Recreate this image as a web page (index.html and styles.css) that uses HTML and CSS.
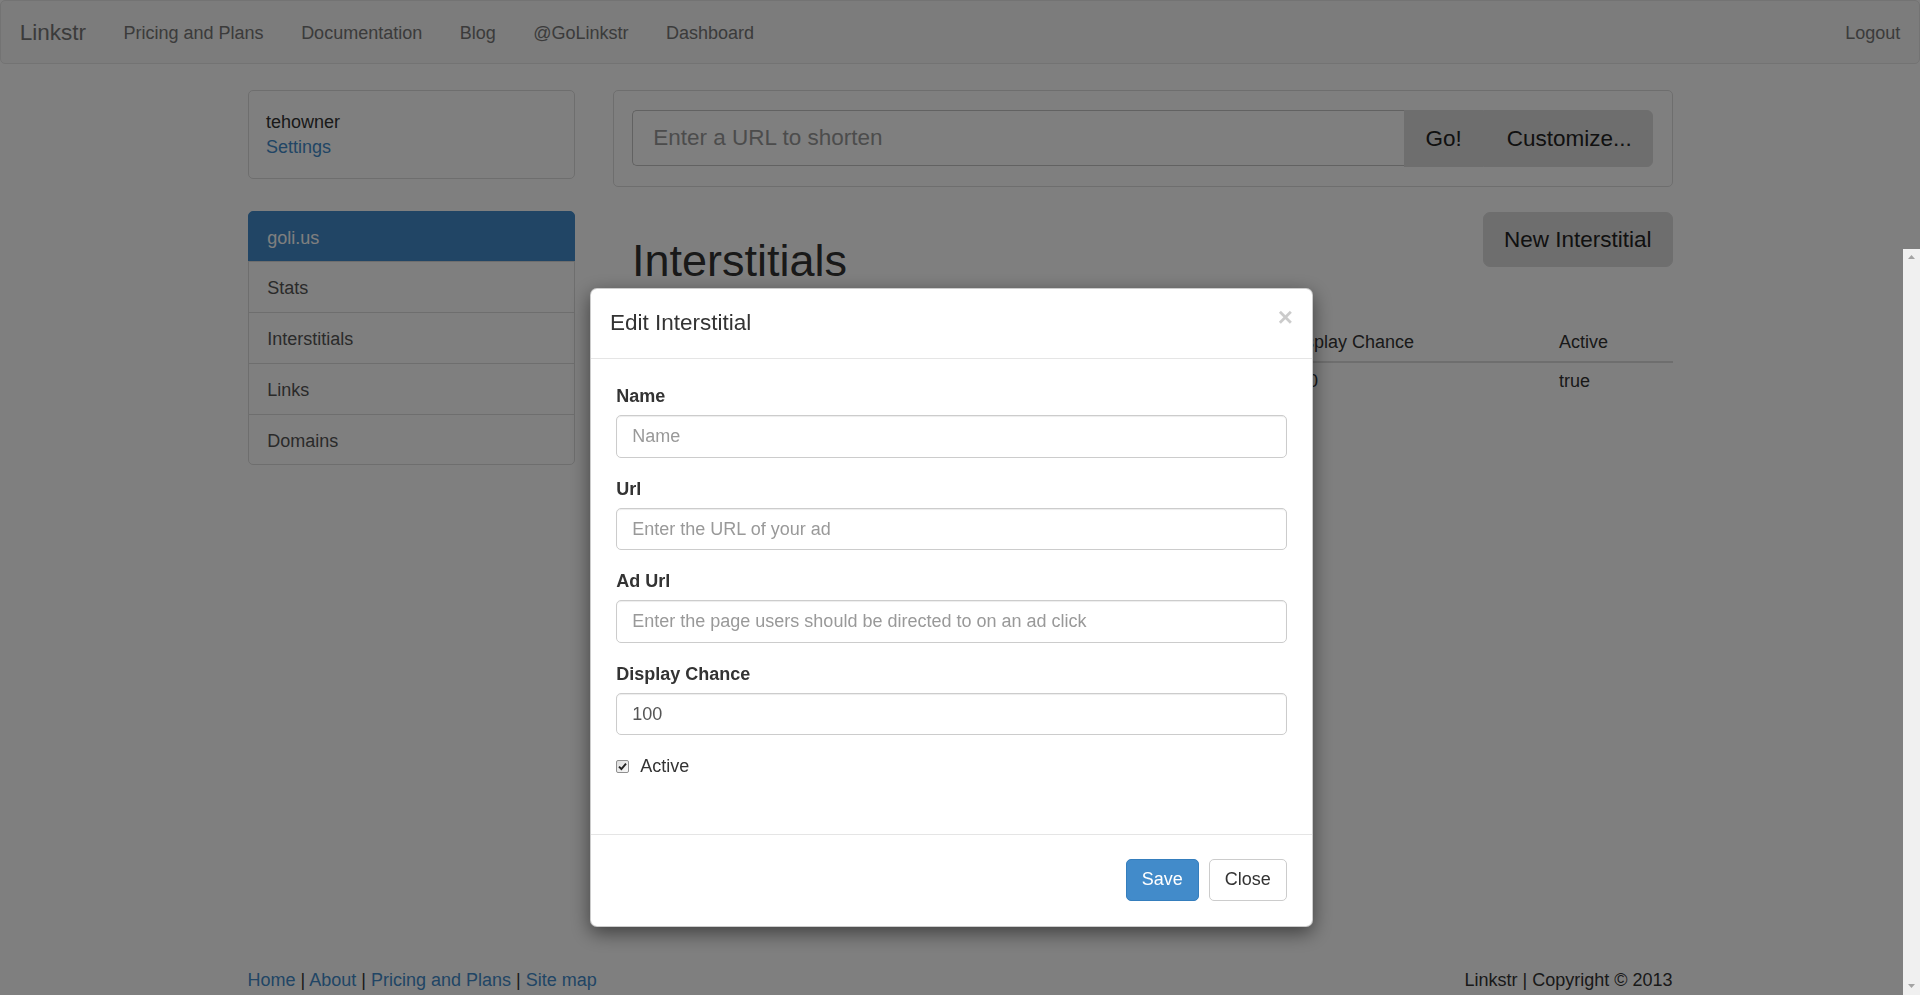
FILE: index.html
```html
<!DOCTYPE html>
<html lang="en">
<head>
<meta charset="utf-8">
<title>Linkstr - Interstitials</title>
<link rel="stylesheet" href="styles.css">
</head>
<body>
<nav class="navbar">
  <a class="brand" href="#">Linkstr</a>
  <ul class="nav">
    <li><a href="#">Pricing and Plans</a></li>
    <li><a href="#">Documentation</a></li>
    <li><a href="#">Blog</a></li>
    <li><a href="#">@GoLinkstr</a></li>
    <li><a href="#">Dashboard</a></li>
  </ul>
  <ul class="nav nav-right">
    <li><a href="#">Logout</a></li>
  </ul>
</nav>

<div class="container main">
  <aside class="sidebar">
    <div class="panel user-panel">
      <div>tehowner</div>
      <a href="#">Settings</a>
    </div>
    <div class="list-group">
      <a class="list-item active" href="#">goli.us</a>
      <a class="list-item" href="#">Stats</a>
      <a class="list-item" href="#">Interstitials</a>
      <a class="list-item" href="#">Links</a>
      <a class="list-item" href="#">Domains</a>
    </div>
  </aside>

  <section class="content">
    <div class="panel shorten-panel">
      <form class="input-group">
        <input class="input-lg" type="text" placeholder="Enter a URL to shorten">
        <div class="group-btns">
          <button type="button" class="btn-gray">Go!</button>
          <button type="button" class="btn-gray last">Customize...</button>
        </div>
      </form>
    </div>

    <div class="page-head">
      <h1>Interstitials</h1>
      <button type="button" class="btn-gray btn-new">New Interstitial</button>
    </div>

    <table class="table">
      <thead>
        <tr>
          <th class="col-name">Name</th>
          <th class="col-url">Url</th>
          <th class="col-ad">Ad Url</th>
          <th class="col-chance">Display Chance</th>
          <th class="col-active">Active</th>
        </tr>
      </thead>
      <tbody>
        <tr>
          <td>Sample Ad</td>
          <td>http://goli.us/ad</td>
          <td>http://goli.us</td>
          <td>100</td>
          <td>true</td>
        </tr>
      </tbody>
    </table>
  </section>
</div>

<footer class="container footer">
  <div class="footer-links">
    <a href="#">Home</a> | <a href="#">About</a> | <a href="#">Pricing and Plans</a> | <a href="#">Site map</a>
  </div>
  <div class="copyright">Linkstr | Copyright © 2013</div>
</footer>

<div class="backdrop"></div>

<div class="modal">
  <div class="modal-dialog">
    <div class="modal-content">
      <div class="modal-header">
        <h4 class="modal-title">Edit Interstitial</h4>
        <button type="button" class="close">×</button>
      </div>
      <div class="modal-body">
        <div class="form-group">
          <label>Name</label>
          <input class="form-control" type="text" placeholder="Name">
        </div>
        <div class="form-group">
          <label>Url</label>
          <input class="form-control" type="text" placeholder="Enter the URL of your ad">
        </div>
        <div class="form-group">
          <label>Ad Url</label>
          <input class="form-control" type="text" placeholder="Enter the page users should be directed to on an ad click">
        </div>
        <div class="form-group">
          <label>Display Chance</label>
          <input class="form-control" type="text" value="100">
        </div>
        <div class="checkbox">
          <svg class="check-box" width="13" height="13" viewBox="0 0 13 13">
            <defs>
              <linearGradient id="cbg" x1="0" y1="0" x2="1" y2="1">
                <stop offset="0" stop-color="#dcdcdc"/>
                <stop offset="1" stop-color="#fafafa"/>
              </linearGradient>
            </defs>
            <rect x="0.5" y="0.5" width="12" height="12" rx="1.5" fill="url(#cbg)" stroke="#8f8f8f"/>
            <path d="M3 6.6 L5.4 9 L10 3.6" fill="none" stroke="#222" stroke-width="1.9"/>
          </svg>
          <span>Active</span>
        </div>
      </div>
      <div class="modal-footer">
        <button type="button" class="btn btn-primary">Save</button>
        <button type="button" class="btn btn-default">Close</button>
      </div>
    </div>
  </div>
</div>

<div class="scrollbar">
  <svg width="7" height="4" viewBox="0 0 7 4"><path d="M0 4 L3.5 0 L7 4 Z" fill="#a3a3a3"/></svg>
  <svg width="7" height="4" viewBox="0 0 7 4"><path d="M0 0 L7 0 L3.5 4 Z" fill="#a3a3a3"/></svg>
</div>
</body>
</html>
```

FILE: styles.css
```css
* {
  box-sizing: border-box;
}

html, body {
  margin: 0;
  padding: 0;
}

body {
  font-family: "Liberation Sans", Arial, Helvetica, sans-serif;
  font-size: 18px;
  line-height: 25px;
  color: #333;
  background: #fff;
  min-height: 100vh;
  display: flex;
  flex-direction: column;
}

a {
  color: #428bca;
  text-decoration: none;
}

ul {
  list-style: none;
  margin: 0;
  padding: 0;
}

/* ---------- navbar ---------- */
.navbar {
  height: 64px;
  display: flex;
  align-items: center;
  padding-top: 2px;
  background: #f8f8f8;
  border: 1px solid #e7e7e7;
  border-radius: 5px;
  margin-bottom: 26px;
}

.brand {
  color: #777;
  font-size: 22.5px;
  padding: 0 18.75px;
  line-height: 30px;
}

.nav {
  display: flex;
}

.nav a {
  color: #777;
  padding: 0 18.75px;
  display: block;
}

.nav-right {
  margin-left: auto;
}

/* ---------- layout ---------- */
.container {
  width: 1425px;
  margin: 0 auto;
}

.main {
  display: flex;
  gap: 38px;
  flex: 1;
  align-items: flex-start;
}

.sidebar {
  width: 327px;
  flex: none;
}

.content {
  flex: 1;
  min-width: 0;
}

.panel {
  border: 1px solid #ddd;
  border-radius: 5px;
  background: #fff;
}

.user-panel {
  padding: 19px 17.5px 17.5px;
  margin-bottom: 32px;
}

.list-group {
  display: flex;
  flex-direction: column;
}

.list-item {
  display: block;
  padding: 14px 18.75px 10.8px;
  border: 1px solid #ddd;
  margin-bottom: -1px;
  color: #555;
  background: #fff;
}

.list-item:last-child {
  margin-bottom: 0;
  border-radius: 0 0 5px 5px;
}

.list-item.active {
  background: #428bca;
  border-color: #428bca;
  color: #fff;
  border-radius: 5px 5px 0 0;
}

/* ---------- shorten form ---------- */
.shorten-panel {
  padding: 18.75px;
  margin-bottom: 25px;
}

.input-group {
  display: flex;
  margin: 0;
}

.input-lg {
  flex: 1;
  min-width: 0;
  height: 56.25px;
  border: 1px solid #c4c4c4;
  border-right: 0;
  border-radius: 5px 0 0 5px;
  padding: 13px 20px 12px;
  font-family: inherit;
  font-size: 22.5px;
  color: #555;
  outline: none;
}

.input-lg::placeholder {
  color: #999;
}

.group-btns {
  display: flex;
}

.btn-gray {
  font-family: inherit;
  font-size: 22.5px;
  line-height: 30px;
  color: #222;
  background: #ddd;
  border: 1px solid #ddd;
  padding: 13px 20px 12px;
  border-radius: 0;
  cursor: pointer;
}

.btn-gray.last {
  border-radius: 0 6px 6px 0;
  padding-left: 23px;
}

/* ---------- page head ---------- */
.page-head {
  display: flex;
  justify-content: space-between;
  align-items: flex-start;
}

.page-head h1 {
  font-size: 45px;
  font-weight: normal;
  line-height: 49.5px;
  margin: 24.5px 0 0;
  padding-left: 19.5px;
  color: #333;
}

.btn-new {
  height: 55px;
  border-radius: 7px;
  padding: 12px 20px 11px;
}

/* ---------- table ---------- */
.table {
  width: 100%;
  table-layout: fixed;
  border-collapse: collapse;
  margin-top: 37.5px;
}

.table th,
.table td {
  text-align: left;
  font-weight: normal;
  padding: 6.75px 6.25px 5.75px;
  line-height: 25px;
  white-space: nowrap;
  overflow: hidden;
}

.table th {
  border-bottom: 2px solid #ddd;
}

.col-name { width: 200px; }
.col-url { width: 235px; }
.col-ad { width: 234.25px; }
.col-chance { width: 271px; }

/* ---------- footer ---------- */
.footer {
  display: flex;
  justify-content: space-between;
  padding-bottom: 2.5px;
  line-height: 25px;
}

/* ---------- modal ---------- */
.backdrop {
  position: fixed;
  inset: 0;
  background: rgba(0, 0, 0, 0.5);
}

.modal {
  position: fixed;
  top: 249px;
  left: 0;
  right: 17px;
  bottom: 0;
}

.modal-dialog {
  width: 722.5px;
  margin: 38.7px auto 0;
}

.modal-content {
  background: #fff;
  border: 1px solid rgba(0, 0, 0, 0.2);
  border-radius: 7px;
  box-shadow: 0 6px 19px rgba(0, 0, 0, 0.5);
}

.modal-header {
  display: flex;
  justify-content: space-between;
  align-items: flex-start;
  padding: 18.75px;
  border-bottom: 1px solid #e5e5e5;
}

.modal-title {
  margin: 0;
  font-size: 22.5px;
  font-weight: normal;
  line-height: 32px;
  color: #333;
}

.close {
  font-family: inherit;
  font-size: 26px;
  font-weight: bold;
  line-height: 26px;
  color: #000;
  opacity: 0.2;
  background: none;
  border: 0;
  padding: 0;
  margin-top: -3px;
  cursor: pointer;
}

.modal-body {
  padding: 25px 25px 25px;
}

.form-group {
  margin-bottom: 18.75px;
}

.form-group label {
  display: block;
  font-weight: bold;
  margin-bottom: 6.25px;
}

.form-control {
  display: block;
  width: 100%;
  height: 42.5px;
  padding: 7.5px 15px;
  font-family: inherit;
  font-size: 18px;
  color: #555;
  border: 1px solid #ccc;
  border-radius: 5px;
  box-shadow: inset 0 1px 1px rgba(0, 0, 0, 0.075);
  outline: none;
}

.form-control::placeholder {
  color: #999;
}

.checkbox {
  display: flex;
  align-items: center;
  gap: 11px;
  min-height: 25px;
  margin-bottom: 30px;
}

.check-box {
  flex: none;
}

.modal-footer {
  display: flex;
  justify-content: flex-end;
  gap: 10px;
  padding: 23.75px 25px 25px;
  border-top: 1px solid #e5e5e5;
}

.btn {
  font-family: inherit;
  font-size: 18px;
  line-height: 25px;
  padding: 7.5px 15px;
  border: 1px solid transparent;
  border-radius: 5px;
  cursor: pointer;
}

.btn-primary {
  background: #428bca;
  border-color: #357ebd;
  color: #fff;
}

.btn-default {
  background: #fff;
  border-color: #ccc;
  color: #333;
}

/* ---------- scrollbar strip ---------- */
.scrollbar {
  position: fixed;
  top: 249px;
  right: 0;
  bottom: 0;
  width: 17px;
  background: #f0f0f0;
  display: flex;
  flex-direction: column;
  align-items: center;
  justify-content: space-between;
  padding: 6px 0 7px;
}
```
